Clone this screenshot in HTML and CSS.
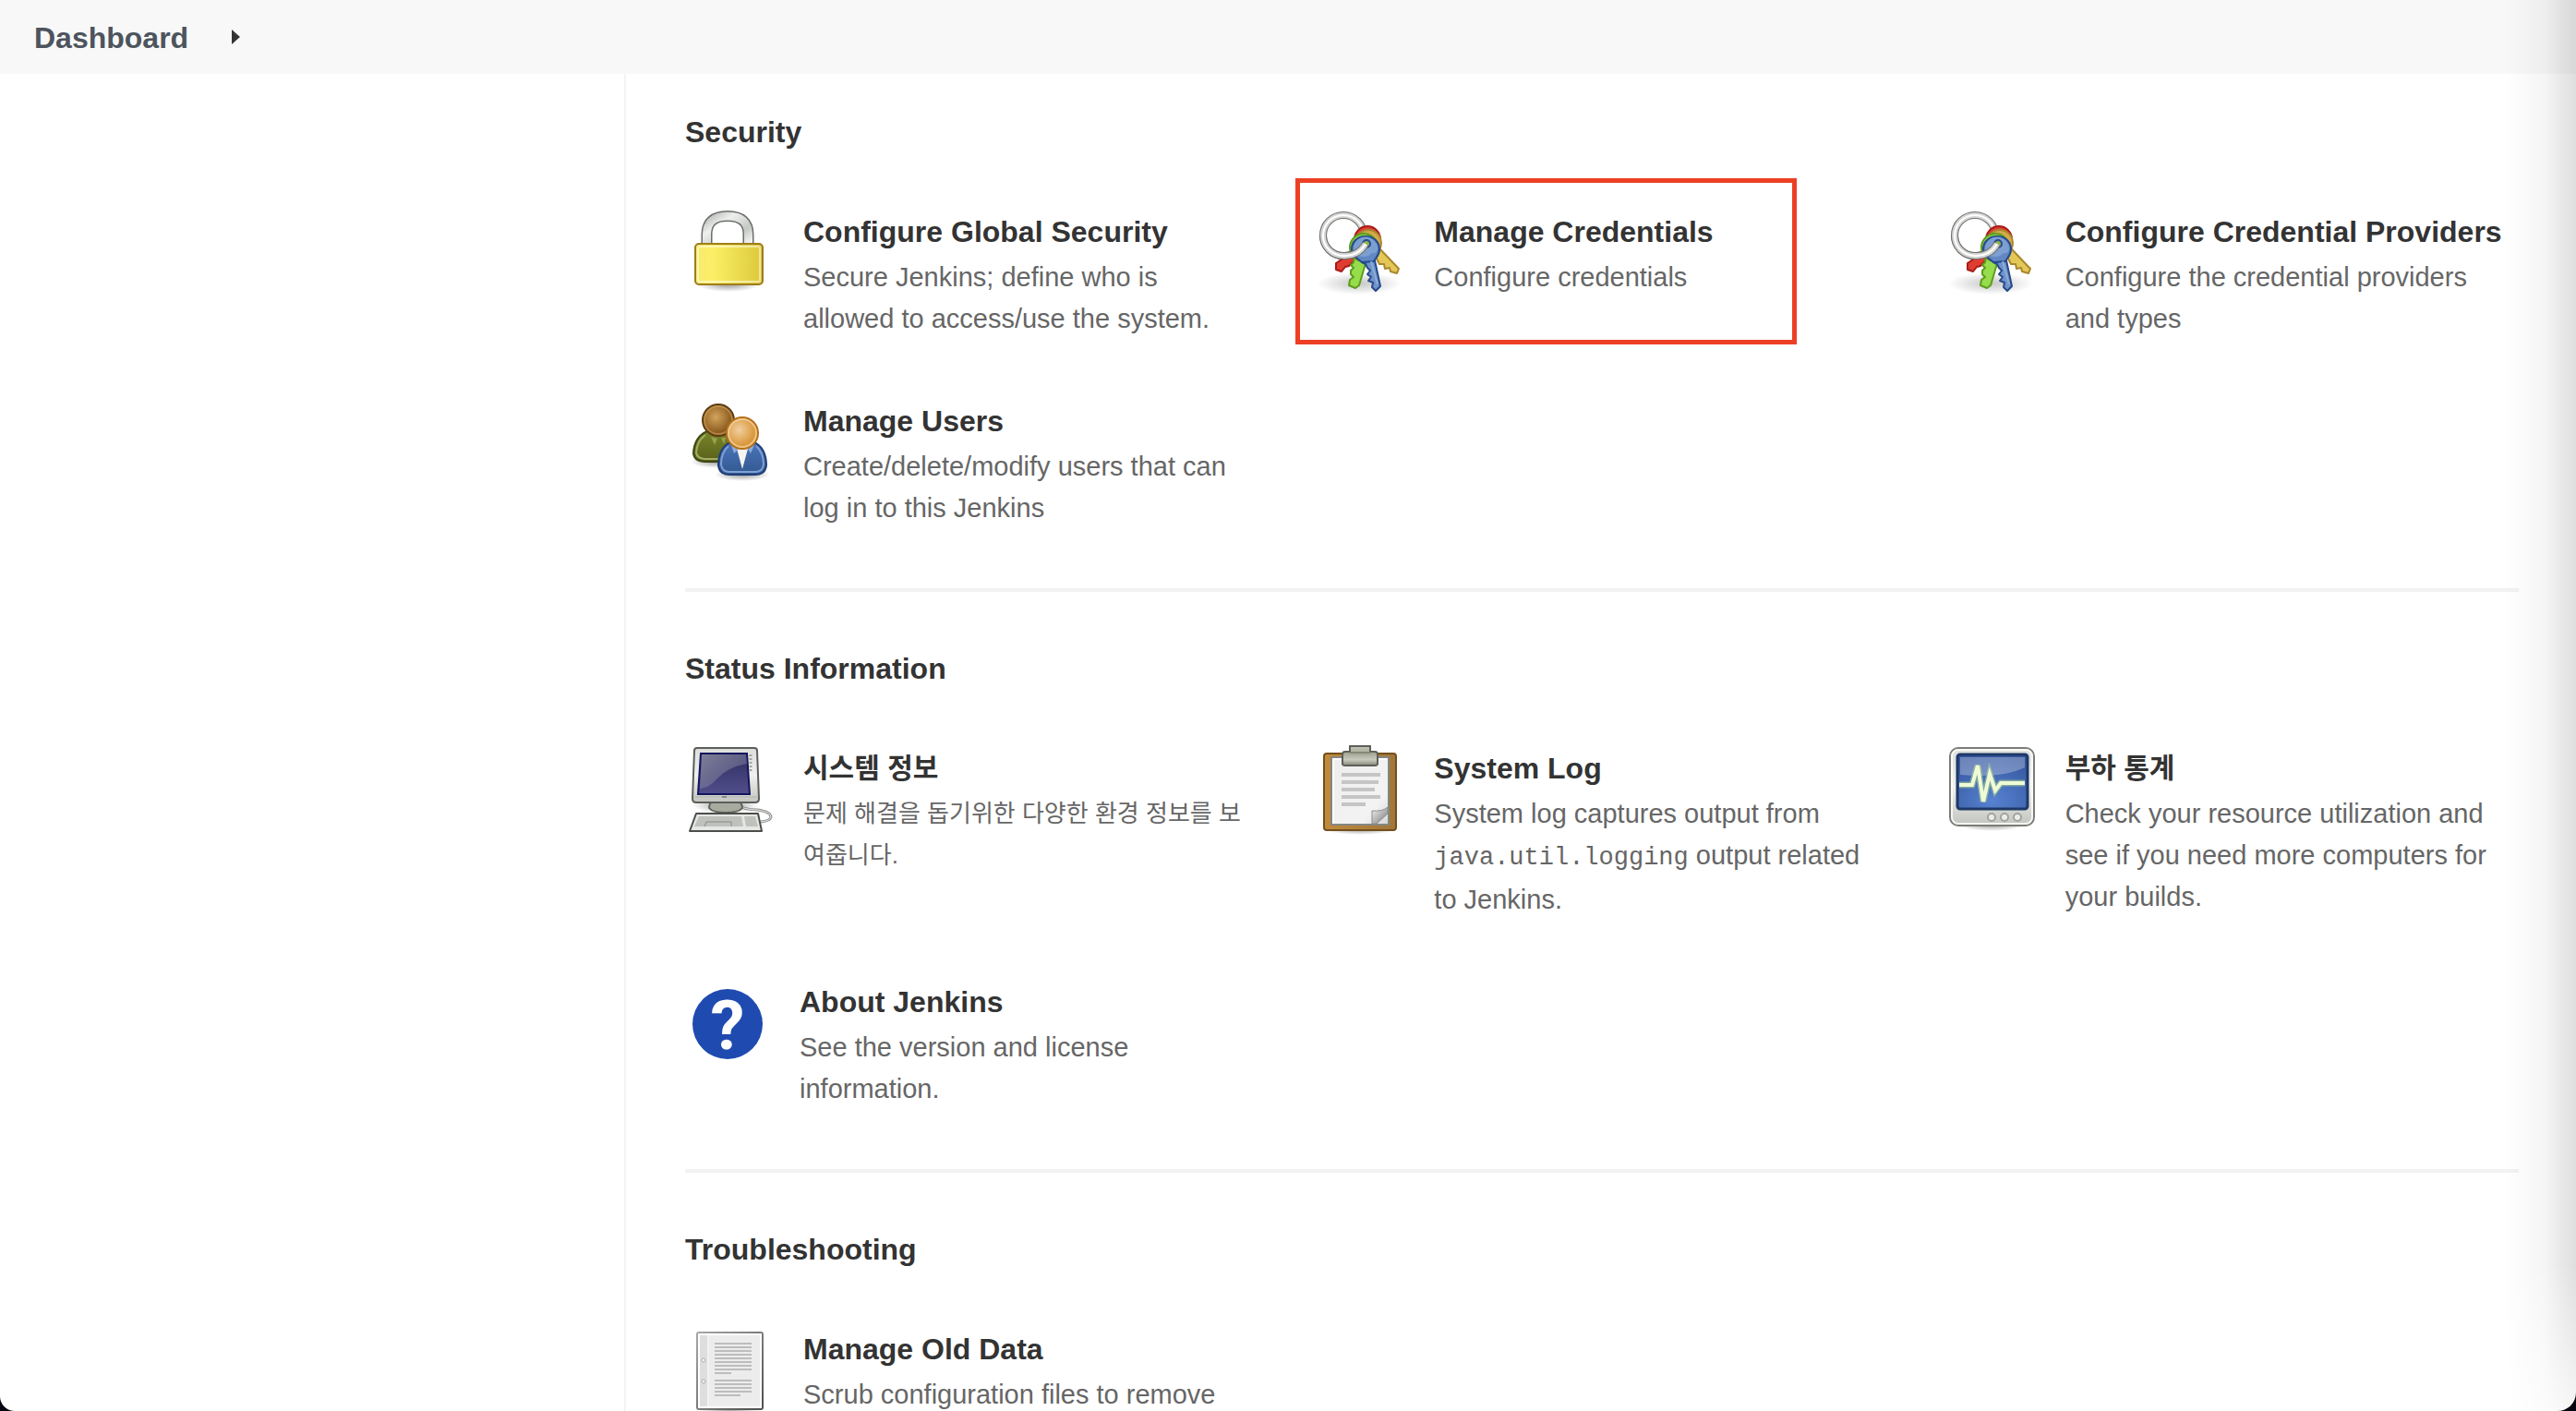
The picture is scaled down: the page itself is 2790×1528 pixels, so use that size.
FILE: index.html
```html
<!DOCTYPE html>
<html lang="ko">
<head>
<meta charset="utf-8">
<title>Manage Jenkins</title>
<link rel="stylesheet" href="styles.css">
</head>
<body>
<svg class="defs" aria-hidden="true">
  <defs>
    <linearGradient id="gold" x1="0" x2="1"><stop offset="0" stop-color="#f7e96f"/><stop offset=".25" stop-color="#fcef67"/><stop offset="1" stop-color="#dcc93a"/></linearGradient>
    <linearGradient id="steel" x1="0" x2="1" y2="1"><stop offset="0" stop-color="#b8bcb8"/><stop offset=".3" stop-color="#eef0ee"/><stop offset=".7" stop-color="#c4c9c4"/><stop offset="1" stop-color="#f2f3f2"/></linearGradient>
    <radialGradient id="shade"><stop offset="0" stop-color="#000" stop-opacity=".4"/><stop offset="1" stop-color="#000" stop-opacity="0"/></radialGradient>
    <radialGradient id="brown" cx=".42" cy=".4"><stop offset="0" stop-color="#d3a45c"/><stop offset="1" stop-color="#8c5c1f"/></radialGradient>
    <radialGradient id="tan" cx=".4" cy=".4"><stop offset="0" stop-color="#f0cfa0"/><stop offset="1" stop-color="#d9973a"/></radialGradient>
    <linearGradient id="green" x2="0" y2="1"><stop offset="0" stop-color="#79852b"/><stop offset="1" stop-color="#586018"/></linearGradient>
    <linearGradient id="blue" x2="0" y2="1"><stop offset="0" stop-color="#4a74bb"/><stop offset="1" stop-color="#33588f"/></linearGradient>
    <linearGradient id="case" x2="0" y2="1"><stop offset="0" stop-color="#dcdfdb"/><stop offset=".5" stop-color="#f0f1ef"/><stop offset="1" stop-color="#c2c5bf"/></linearGradient>
    <linearGradient id="navy" x2="0" y2="1"><stop offset="0" stop-color="#2e2d60"/><stop offset="1" stop-color="#514f8b"/></linearGradient>
    <linearGradient id="glare" x1="0" x2="1" y2="1"><stop offset="0" stop-color="#8a8aa0" stop-opacity=".9"/><stop offset="1" stop-color="#6b6b92" stop-opacity=".4"/></linearGradient>
    <linearGradient id="wood" x1="0" x2="1"><stop offset="0" stop-color="#c18a3c"/><stop offset="1" stop-color="#a0763a"/></linearGradient>
    <linearGradient id="clip" x2="0" y2="1"><stop offset="0" stop-color="#c4c5b6"/><stop offset=".4" stop-color="#a7a998"/><stop offset=".7" stop-color="#c9cabf"/><stop offset="1" stop-color="#85877a"/></linearGradient>
    <linearGradient id="paper" x1="0" x2="1" y2="1"><stop offset="0" stop-color="#ededed"/><stop offset=".75" stop-color="#f3f3f3"/><stop offset="1" stop-color="#d6d6d6"/></linearGradient>
    <linearGradient id="curl" x1="0" x2="1" y2="1"><stop offset="0" stop-color="#f4f4f4"/><stop offset="1" stop-color="#777"/></linearGradient>
    <radialGradient id="scope" cx=".5" cy=".85" r=".9"><stop offset="0" stop-color="#5682d0"/><stop offset="1" stop-color="#34549c"/></radialGradient>
    <linearGradient id="edge" x1="0" x2="1" y2="1"><stop offset="0" stop-color="#a5a7a4"/><stop offset="1" stop-color="#4e504d"/></linearGradient>
    <symbol id="keys" viewBox="0 0 96 96" overflow="visible">
      <ellipse cx="47" cy="81" rx="46" ry="12" fill="url(#shade)" opacity=".55"/>
      <g fill="none"><circle cx="30" cy="29" r="22" stroke="#6d6e6c" stroke-width="8"/><circle cx="30" cy="29" r="22" stroke="#d4d5d3" stroke-width="6"/><circle cx="30" cy="29" r="22" stroke="#fff" stroke-width="2"/></g>
      <g stroke-width="2" stroke-linejoin="round">
        <path d="M42 44 28 55 22 59V66L28 68 32 63 36 62 46 52Z" fill="#df3d32" stroke="#a81a17"/>
        <circle cx="56" cy="33" r="14" fill="#df3d32" stroke="#a81a17"/>
        <path d="M70 44 90 65 88 70 81 68 80 64 75 65 74 60 69 60 66 54 60 50Z" fill="#e3c857" stroke="#aa872f"/>
        <circle cx="57" cy="37" r="14" fill="#d3a94a" stroke="#aa872f"/>
        <path d="M42 52 41 58 38 61 41 64 38 67 38 71 41 74 37 77 36 83 43 86 47 83 55 56Z" fill="#97dc4b" stroke="#5c9d1d"/>
        <circle cx="52" cy="42" r="15" fill="#8ed645" stroke="#5c9d1d"/>
        <path d="M50 58 54 60 56 64 59 67 56 71 60 74 57 78 62 80 61 85 65 89 70 84 64 56Z" fill="#6f93cb" stroke="#274a8b"/>
        <path d="M54 30C63 30 69 36 69 44 69 51 65 53 63 57L50 58C47 55 39 52 39 44 39 36 45 30 54 30Z" fill="#6288c4" stroke="#274a8b"/>
        <path d="M41 43A13 13 0 0 1 67 44Q66 49 61 48 55 55 43 50 41 47 41 43Z" fill="#7c9fd2" stroke="none"/>
        <path d="M60 57 67 82" fill="none" stroke="#8cadd8"/>
      </g>
      <circle cx="55" cy="38" r="4" fill="#8db548" stroke="#274a8b" stroke-width="2"/>
      <g fill="none"><path d="M54 38A25 25 0 0 1 30 51 22 22 0 0 1 8 29" stroke="#6d6e6c" stroke-width="8"/><path d="M54 38A25 25 0 0 1 30 51 22 22 0 0 1 8 29" stroke="#d4d5d3" stroke-width="6"/><path d="M54 38A25 25 0 0 1 30 51 22 22 0 0 1 8 29" stroke="#fff" stroke-width="2"/></g>
    </symbol>
  </defs>
</svg>

<div class="app">
  <nav class="breadcrumbs" aria-label="Breadcrumb">
    <a href="#">Dashboard</a>
    <svg class="arrow" viewBox="0 0 9 16" aria-hidden="true"><path d="M0 0 9 8 0 16Z" fill="#333"/></svg>
  </nav>

  <div class="body">
    <aside class="side"></aside>
    <main class="main">
      <section class="section">
        <h2>Security</h2>
        <div class="cards">
          <a class="card" href="#">
            <svg class="icon" viewBox="0 0 96 96" aria-hidden="true">
              <ellipse cx="47" cy="82" rx="34" ry="8" fill="url(#shade)"/>
              <path d="M23.500 38V28Q23.500 8 46 8T68.500 28V38" fill="none" stroke="#6b6d6b" stroke-width="12"/>
              <path d="M23.500 38V28Q23.500 8 46 8T68.500 28V38" fill="none" stroke="url(#steel)" stroke-width="9"/>
              <rect x="11" y="38" width="73" height="44" rx="4" fill="url(#gold)" stroke="#a07d1c" stroke-width="2"/>
              <rect x="14" y="41" width="67" height="38" rx="2" fill="none" stroke="#fff" stroke-opacity=".5" stroke-width="2"/>
            </svg>
            <div class="text"><h3>Configure Global Security</h3><p>Secure Jenkins; define who is allowed to access/use the system.</p></div>
          </a>
          <a class="card marked" href="#">
            <svg class="icon" aria-hidden="true"><use href="#keys" width="96" height="96"/></svg>
            <div class="text"><h3>Manage Credentials</h3><p>Configure credentials</p></div>
          </a>
          <a class="card" href="#">
            <svg class="icon" aria-hidden="true"><use href="#keys" width="96" height="96"/></svg>
            <div class="text"><h3>Configure Credential Providers</h3><p>Configure the credential providers and types</p></div>
          </a>
          <a class="card" href="#">
            <svg class="icon" viewBox="0 0 96 96" aria-hidden="true">
              <ellipse cx="34" cy="69" rx="28" ry="7" fill="url(#shade)"/>
              <path d="M24 36Q10 42 9 60 10 69 22 69H48Q60 69 61 58 60 42 46 36Z" fill="url(#green)" stroke="#3d4710" stroke-width="2"/>
              <path d="M22 40Q13 46 12 59 13 66 22 66H40" fill="none" stroke="#a4ad66" stroke-width="2"/>
              <path d="M28 42 32 51 35 44M39 43 42 50 44 43" fill="#96a14d"/>
              <circle cx="36" cy="24" r="17" fill="url(#brown)" stroke="#5f3c0f" stroke-width="2"/>
              <circle cx="36" cy="24" r="15" fill="none" stroke="#d6a868" stroke-opacity=".5" stroke-width="2"/>
              <ellipse cx="62" cy="83" rx="30" ry="7" fill="url(#shade)"/>
              <path d="M47 49Q36 56 36 73 37 83 48 83H76Q87 83 88 73 88 56 77 49Z" fill="url(#blue)" stroke="#1f3f79" stroke-width="2"/>
              <path d="M47 52Q39 59 39 72 40 80 48 80H76Q84 80 85 72 85 59 77 52" fill="none" stroke="#7fa0d6" stroke-width="2"/>
              <path d="M56 55H68L62 77Z" fill="#f4f4f2"/>
              <path d="M50 51 53 60 58 55ZM68 55 71 60 75 51Z" fill="#8eabd8"/>
              <circle cx="62" cy="38" r="17" fill="url(#tan)" stroke="#b3701a" stroke-width="2"/>
              <circle cx="62" cy="38" r="15" fill="none" stroke="#f6d7a8" stroke-opacity=".7" stroke-width="2"/>
            </svg>
            <div class="text"><h3>Manage Users</h3><p>Create/delete/modify users that can log in to this Jenkins</p></div>
          </a>
        </div>
      </section>

      <section class="section">
        <h2>Status Information</h2>
        <div class="cards">
          <a class="card korean" href="#">
            <svg class="icon" viewBox="0 0 96 96" aria-hidden="true">
              <ellipse cx="44" cy="65" rx="36" ry="9" fill="url(#shade)"/>
              <path d="M55 64Q64 70 78 70 93 72 93 78 92 82 82 83" fill="none" stroke="#8d8f8c" stroke-width="3"/>
              <path d="M55 64Q64 70 78 70 93 72 93 78 92 82 82 83" fill="none" stroke="#e9eae8" stroke-width="1"/>
              <path d="M30 60H58Q62 64 62 68 58 73 44 73T26 68Q26 63 30 60Z" fill="#a7ab9f" stroke="#60635c" stroke-width="2"/>
              <path d="M13 3H75Q78 3 78 6L80 58Q80 62 76 62H12Q8 62 8 58L10 6Q10 3 13 3Z" fill="url(#case)" stroke="#5c5e5b" stroke-width="2"/>
              <path d="M10 56H78" stroke="#b0b2ae"/>
              <path d="M17 9H67L70 53H14Z" fill="url(#navy)" stroke="#15155e" stroke-width="2"/>
              <path d="M18 10H66L67 20Q45 24 34 37 26 46 16 47Z" fill="url(#glare)"/>
              <path d="M71 10V29" stroke="#a3a5a1" stroke-width="3" stroke-dasharray="2 2"/>
              <path d="M40 55h5v2h-5z" fill="#888"/>
              <path d="M12 74H79L83 93H5Z" fill="#e6e7e4" stroke="#4c4e4b" stroke-width="2" stroke-linejoin="round"/>
              <path d="M15 77H61L63 88H10ZM64 77H76L79 88H66Z" fill="#bfc1bd"/>
              <path d="M21 88 23 83H50V88" fill="none" stroke="#898b87"/>
            </svg>
            <div class="text"><h3>시스템 정보</h3><p>문제 해결을 돕기위한 다양한 환경 정보를 보여줍니다.</p></div>
          </a>
          <a class="card" href="#">
            <svg class="icon" viewBox="0 0 96 96" aria-hidden="true">
              <ellipse cx="48" cy="91" rx="38" ry="6" fill="url(#shade)"/>
              <rect x="9" y="9" width="78" height="83" rx="3" fill="url(#wood)" stroke="#73501c" stroke-width="2"/>
              <rect x="17" y="13" width="62" height="73" fill="url(#paper)" stroke="#848782" stroke-width="2"/>
              <path d="M19 85V15H77" fill="none" stroke="#fff" stroke-width="2"/>
              <path d="M28 30h42v4H28zM28 38h40v4H28zM28 46h36v4H28zM28 54h42v4H28zM28 62h26v4H28z" fill="#c5c5c5"/>
              <path d="M61 71Q73 72 78 67V74L66 85H61Z" fill="url(#curl)" stroke="#8c8e8a"/>
              <path d="M37 1H59V7H64Q67 7 67 10V20Q67 22 64 22H32Q29 22 29 20V10Q29 7 32 7H37Z" fill="url(#clip)" stroke="#5e6057" stroke-width="2"/>
              <path d="M37 8H59" stroke="#85877a" stroke-width="2"/>
            </svg>
            <div class="text"><h3>System Log</h3><p>System log captures output from <code>java.util.logging</code> output related to Jenkins.</p></div>
          </a>
          <a class="card korean-title" href="#">
            <svg class="icon" viewBox="0 0 96 96" aria-hidden="true">
              <ellipse cx="48" cy="86" rx="36" ry="7" fill="url(#shade)"/>
              <rect x="3" y="3" width="91" height="84" rx="9" fill="url(#case)" stroke="#7b7d76" stroke-width="2"/>
              <rect x="5" y="5" width="87" height="80" rx="7" fill="none" stroke="#fff" stroke-opacity=".8" stroke-width="2"/>
              <rect x="11" y="10" width="76" height="59" rx="3" fill="url(#scope)" stroke="#1f3867" stroke-width="3"/>
              <path d="M14 13H84V24Q60 36 14 32Z" fill="#fff" opacity=".28"/>
              <path d="M13 43H27L33 22 39 61 46 31 52 49 58 41H84" fill="none" stroke="#a9cf8e" stroke-opacity=".6" stroke-width="7"/>
              <path d="M13 43H27L33 22 39 61 46 31 52 49 58 41H84" fill="none" stroke="#effbd5" stroke-width="4"/>
              <g fill="#eceeea" stroke="#a2a49e" stroke-width="2"><circle cx="48" cy="78" r="4"/><circle cx="62" cy="78" r="4"/><circle cx="76" cy="78" r="4"/></g>
            </svg>
            <div class="text"><h3>부하 통계</h3><p>Check your resource utilization and see if you need more computers for your builds.</p></div>
          </a>
          <a class="card" href="#">
            <svg class="icon narrow" viewBox="0 0 92 96" aria-hidden="true">
              <circle cx="46" cy="49" r="38" fill="#1f4bb0"/>
              <text class="mark" x="46" y="76" text-anchor="middle">?</text>
            </svg>
            <div class="text"><h3>About Jenkins</h3><p>See the version and license information.</p></div>
          </a>
        </div>
      </section>

      <section class="section">
        <h2>Troubleshooting</h2>
        <div class="cards">
          <a class="card" href="#">
            <svg class="icon" viewBox="0 0 96 96" aria-hidden="true">
              <ellipse cx="48" cy="90" rx="34" ry="6" fill="url(#shade)"/>
              <rect x="13" y="7" width="71" height="83" rx="2" fill="#ececec" stroke="url(#edge)" stroke-width="2"/>
              <rect x="15" y="9" width="67" height="79" fill="none" stroke="#fff" stroke-width="2"/>
              <path d="M16 10h8v77h-8z" fill="#dedede"/><path d="M25 10V87" stroke="#f8f8f8"/>
              <path d="M32 19H72M32 23H72M32 27H72M32 31H72M32 35H72M32 39H72M32 43H72M32 47H72M32 51H50M32 59H72M32 63H72M32 67H72M32 71H72M32 75H60" stroke="#bdbdbd" stroke-width="2"/>
              <g fill="#fff" stroke="#aaa"><circle cx="20" cy="37" r="2"/><circle cx="20" cy="60" r="2"/></g>
            </svg>
            <div class="text"><h3>Manage Old Data</h3><p>Scrub configuration files to remove</p></div>
          </a>
        </div>
      </section>
    </main>
  </div>
  <div class="edge-shadow"></div>
</div>
</body>
</html>
```
FILE: styles.css
```css
*,
*::after {
  box-sizing: border-box;
}

html {
  background: #05060f;
}

body,
h2,
h3,
p {
  margin: 0;
}

body {
  font-family: "Liberation Sans", "Noto Sans CJK KR", sans-serif;
  color: #333;
}

a {
  color: inherit;
  text-decoration: none;
}

.defs {
  position: absolute;
  width: 0;
  height: 0;
}

.app {
  position: relative;
  display: flex;
  flex-direction: column;
  height: 100vh;
  overflow: hidden;
  background: #fff;
  border-radius: 0 0 20px 16px;
}

.breadcrumbs {
  display: flex;
  flex: none;
  align-items: center;
  gap: 47px;
  height: 80px;
  padding: 0 37px;
  background: #f8f8f8;
  color: #4d545d;
  font-size: 32px;
  font-weight: bold;
}

.breadcrumbs a {
  padding-top: 2px;
}

.arrow {
  width: 9px;
  height: 16px;
}

.body {
  display: flex;
  flex: 1;
  min-height: 0;
}

.side {
  flex: none;
  width: 676px;
}

.main {
  flex: 1;
  min-width: 0;
  padding: 38px 62px 0 64px;
  overflow: hidden;
  border-left: 2px solid #f3f3f3;
}

.section + .section {
  margin-top: 64px;
  padding-top: 58px;
  border-top: 4px solid #f2f2f2;
}

h2,
h3 {
  font-size: 32px;
  font-weight: bold;
  line-height: 50px;
}

.cards {
  display: grid;
  grid-template-columns: repeat(3, minmax(0, 1fr));
  gap: 63px 64px;
  margin-top: 58px;
}

.card {
  position: relative;
  display: flex;
  gap: 32px;
}

.marked::after {
  content: "";
  position: absolute;
  top: -33px;
  left: -22px;
  width: 543px;
  height: 180px;
  border: 5px solid #ec4024;
}

.icon {
  flex: none;
  width: 96px;
  height: 96px;
  overflow: visible;
}

.icon.narrow {
  width: 92px;
}

.mark {
  fill: #fff;
  font-family: Roboto, sans-serif;
  font-size: 74px;
  font-weight: bold;
}

.text {
  flex: 1;
  min-width: 0;
  padding-right: 12px;
}

p {
  margin-top: 2px;
  color: #666;
  font-size: 29px;
  line-height: 45px;
}

.korean h3,
.korean-title h3 {
  font-size: 30px;
}

.korean p {
  font-size: 26px;
}

code {
  font-family: "Liberation Mono", monospace;
  font-size: 27px;
}

.edge-shadow {
  position: absolute;
  top: 0;
  right: 0;
  bottom: 0;
  width: 76px;
  background: linear-gradient(to right, rgba(0, 0, 0, 0), rgba(0, 0, 0, .04) 55%, rgba(0, 0, 0, .13));
  mask-image: linear-gradient(to bottom, #000 calc(100% - 160px), rgba(0, 0, 0, .3));
  pointer-events: none;
}
```
